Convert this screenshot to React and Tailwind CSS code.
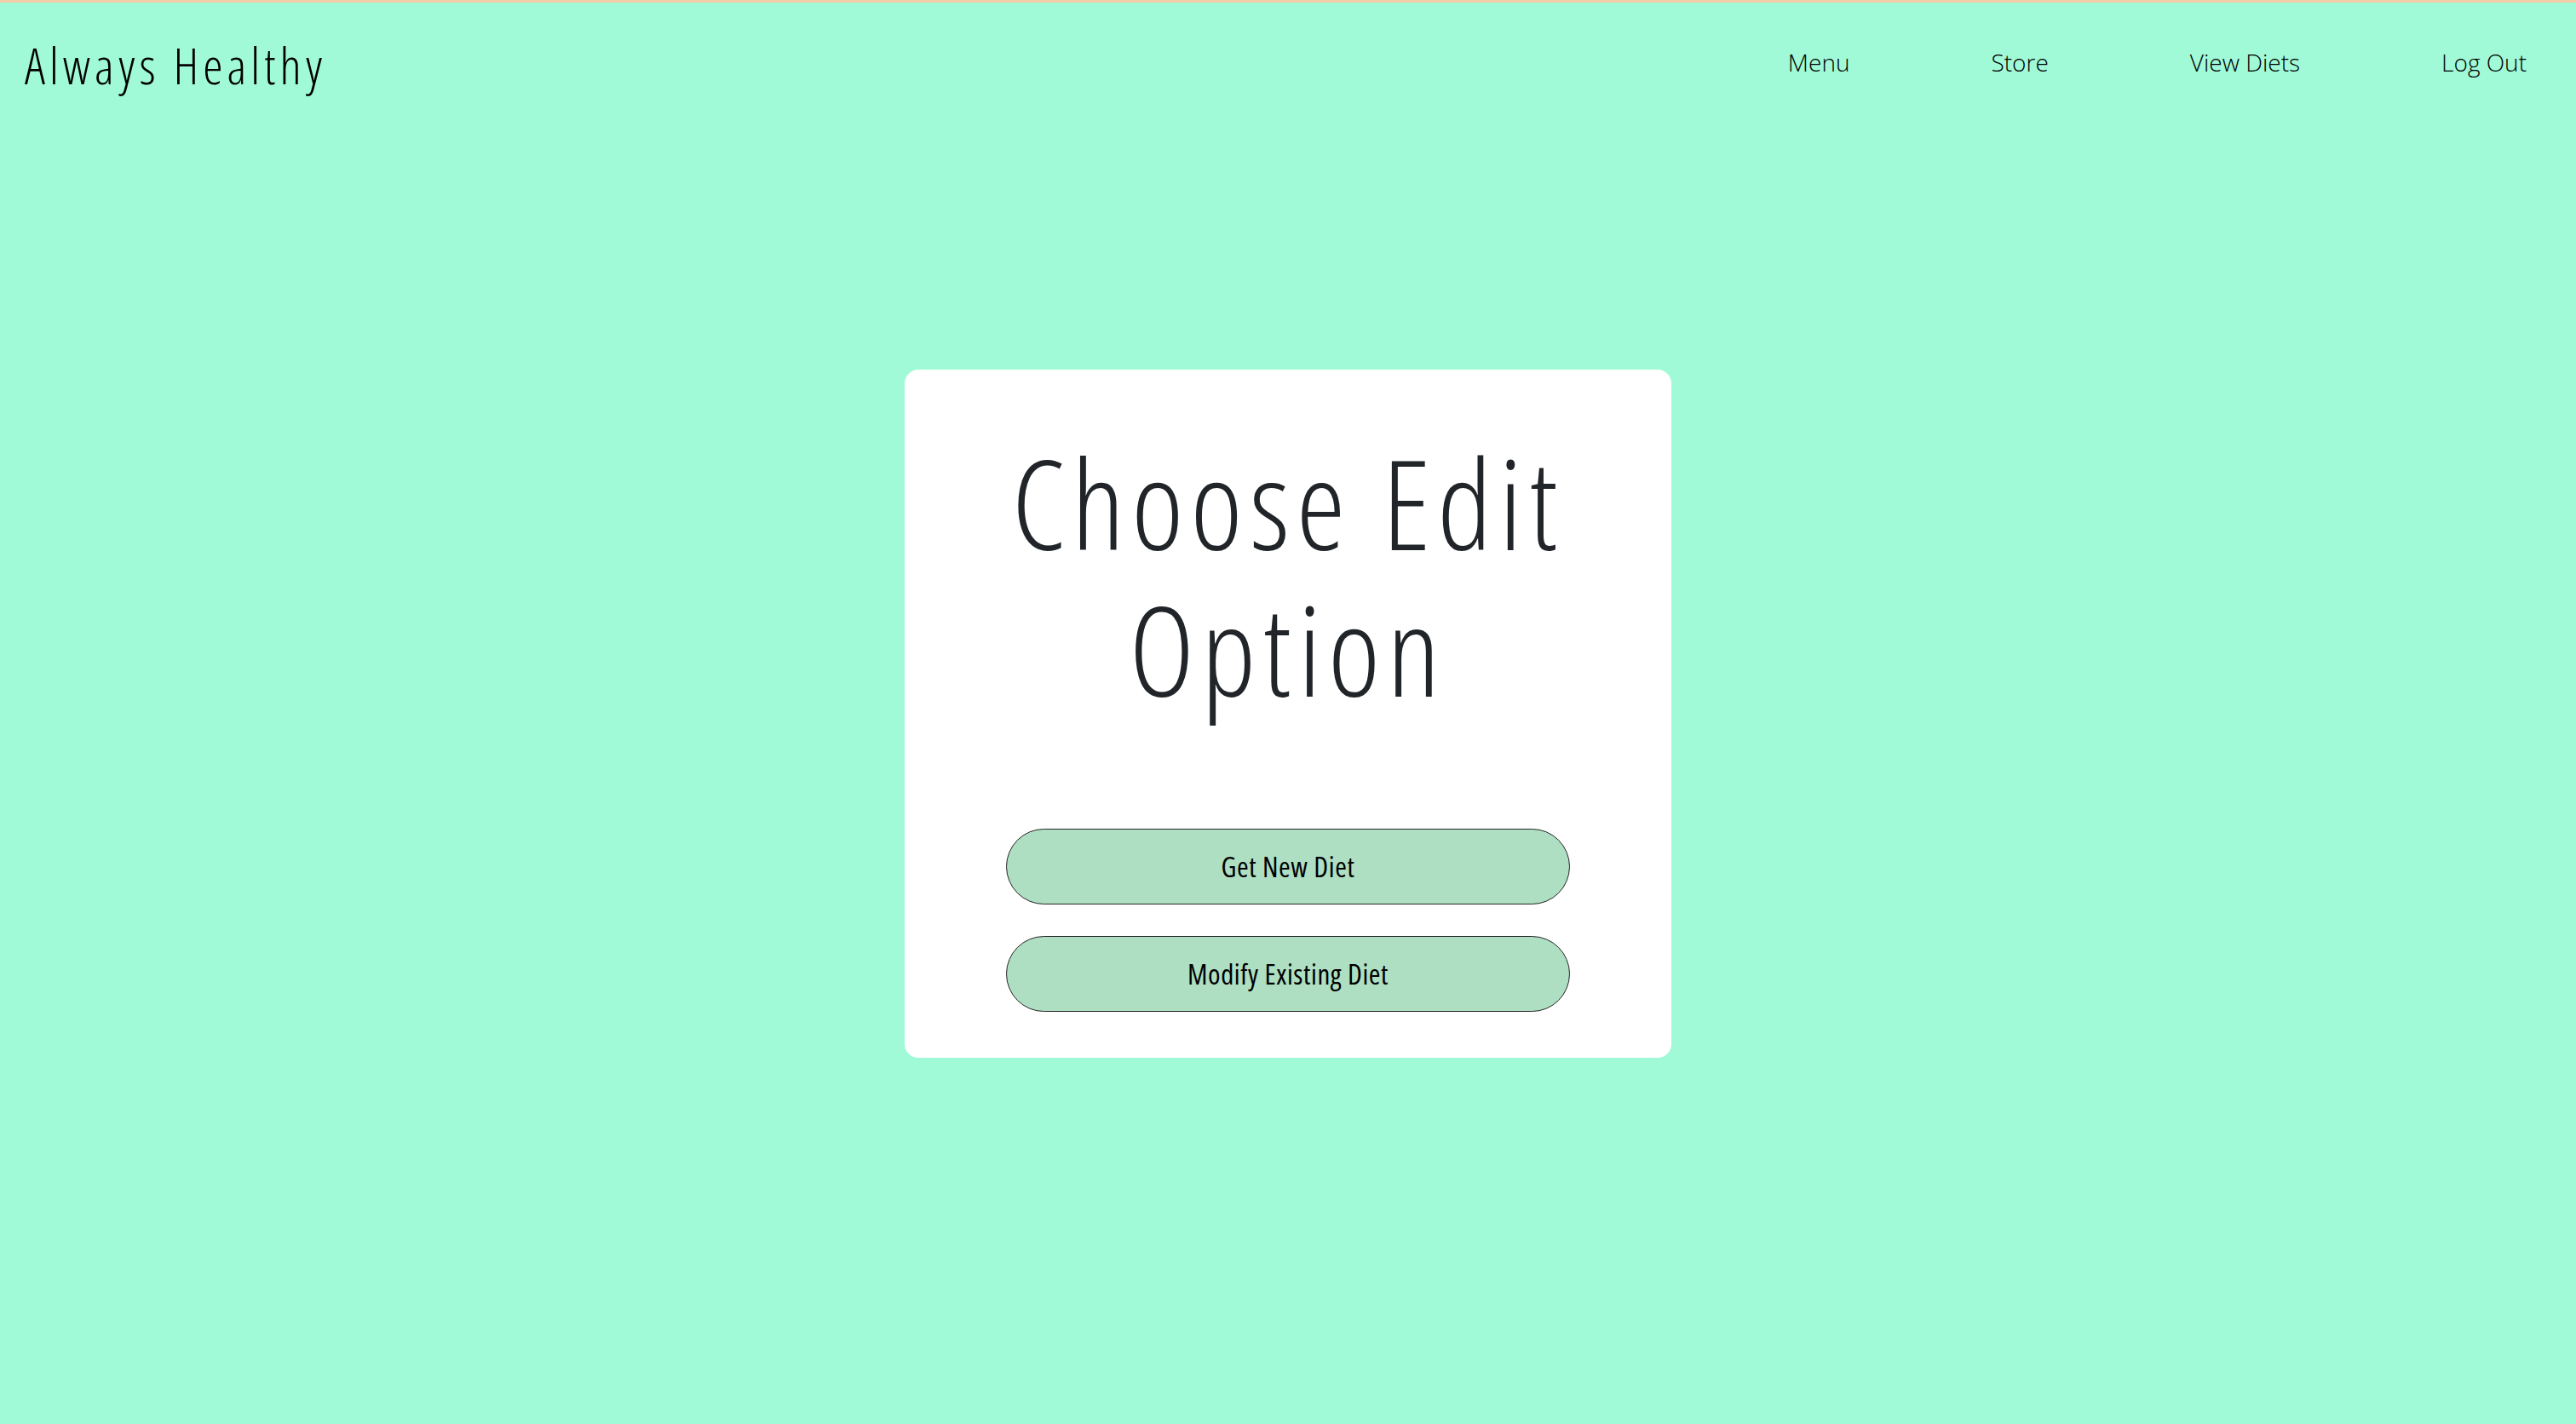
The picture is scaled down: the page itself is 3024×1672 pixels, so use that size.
function NavLink({ children }) {
  return (
    <a href="#" className="text-[28px] leading-[40px] font-light text-black">
      {children}
    </a>
  );
}

function OptionButton({ children }) {
  return (
    <button
      type="button"
      className="w-full h-[89px] rounded-full border border-[#262626] bg-[#aedfc2] text-[33px] font-normal tracking-[0.6px] text-black [font-stretch:75%] flex items-center justify-center"
    >
      {children}
    </button>
  );
}

export default function App() {
  return (
    <div className="font-['Open_Sans','Noto_Sans',sans-serif] min-h-[1672px] bg-[#a0fad7] border-t-[3px] border-[#f4cda8] flex flex-col">
      <header className="flex items-start justify-between pl-[29px] pr-[58px]">
        <div className="mt-[33px] text-[59px] leading-[80px] font-light tracking-[5px] text-black [font-stretch:75%]">
          Always Healthy
        </div>
        <nav className="mt-[50px] flex items-center gap-[166px]">
          <NavLink>Menu</NavLink>
          <NavLink>Store</NavLink>
          <NavLink>View Diets</NavLink>
          <NavLink>Log Out</NavLink>
        </nav>
      </header>
      <main className="flex justify-center pt-[318px]">
        <section className="w-[900px] bg-white rounded-[16px] px-[119px] pt-[70px] pb-[54px] flex flex-col">
          <h1 className="text-center text-[146px] leading-[172px] font-light tracking-[8px] text-[#212529] [font-stretch:75%]">
            Choose Edit Option
          </h1>
          <div className="mt-[125px] flex flex-col gap-[37px]">
            <OptionButton>Get New Diet</OptionButton>
            <OptionButton>Modify Existing Diet</OptionButton>
          </div>
        </section>
      </main>
    </div>
  );
}
